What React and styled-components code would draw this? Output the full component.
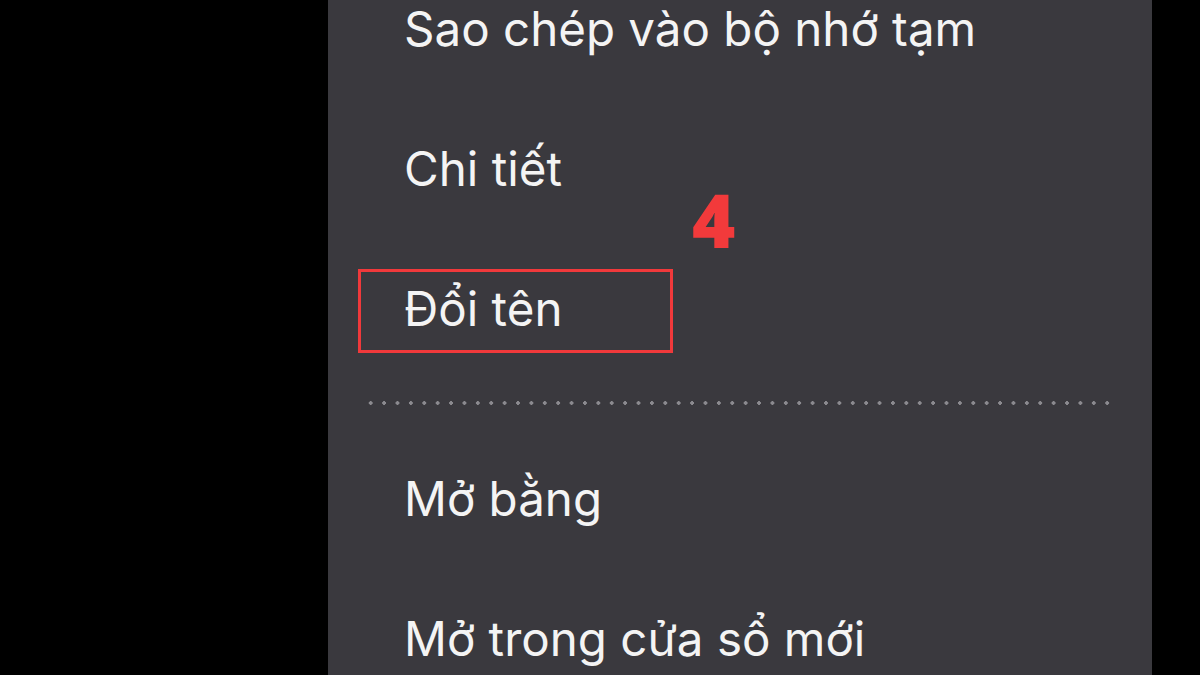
import React from 'react';
import styled, { createGlobalStyle } from 'styled-components';

const GlobalStyle = createGlobalStyle`
  html, body {
    margin: 0;
    padding: 0;
    background: #000;
    overflow: hidden;
  }
`;

const Screen = styled.div`
  width: 1200px;
  height: 675px;
  background: #000;
  overflow: hidden;
`;

const Panel = styled.div`
  margin-left: 328px;
  width: 824px;
  height: 675px;
  background: #3a393e;
  overflow: hidden;
`;

const List = styled.div`
  display: flex;
  flex-direction: column;
  margin-top: -42px;
`;

const Item = styled.div`
  position: relative;
  height: 140px;
  display: flex;
  align-items: center;
  padding-left: 76px;
  font-family: Inter, "Noto Sans", sans-serif;
  font-size: 47.5px;
  color: #f4f4f4;
`;

const Separator = styled.div`
  height: 50px;
  display: flex;
  align-items: center;
  padding: 0 36px 0 36px;
`;

const Dots = styled.div`
  flex: 1;
  height: 4px;
  background-image: radial-gradient(circle, #8b8a8f 1.6px, transparent 2px);
  background-size: 13.4px 4px;
  background-repeat: repeat-x;
`;

const HighlightBox = styled.div`
  position: absolute;
  left: 30px;
  top: 31px;
  width: 309px;
  height: 78px;
  border: 3px solid #f0393b;
`;

const StepNumber = styled.div`
  position: absolute;
  left: 364px;
  top: -55px;
  font-family: "Open Sans", sans-serif;
  font-weight: 800;
  font-size: 74px;
  color: #f23a3b;
  line-height: 1;
`;

const items = [
  'Sao chép vào bộ nhớ tạm',
  'Chi tiết',
];

const lowerItems = [
  'Mở bằng',
  'Mở trong cửa sổ mới',
];

const App = () => {
  return (
    <Screen>
      <GlobalStyle />
      <Panel>
        <List>
          {items.map((label) => (
            <Item key={label}>{label}</Item>
          ))}
          <Item>
            <HighlightBox />
            <StepNumber>4</StepNumber>
            Đổi tên
          </Item>
          <Separator>
            <Dots />
          </Separator>
          {lowerItems.map((label) => (
            <Item key={label}>{label}</Item>
          ))}
        </List>
      </Panel>
    </Screen>
  );
};

export default App;
